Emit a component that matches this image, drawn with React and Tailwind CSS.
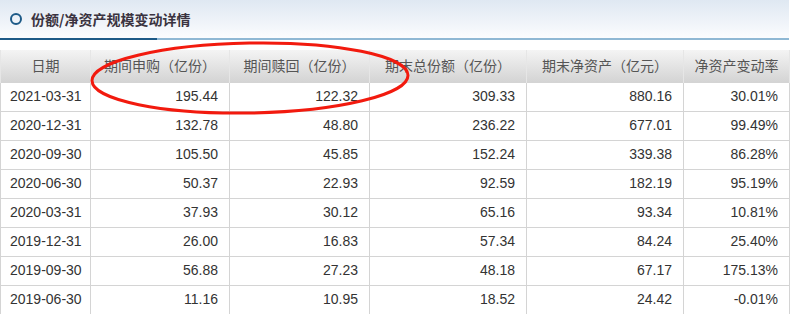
const cols = [
  { label: "日期", w: "w-[90px]" },
  { label: "期间申购（亿份）", w: "w-[139px]" },
  { label: "期间赎回（亿份）", w: "w-[140px]" },
  { label: "期末总份额（亿份）", w: "w-[157px]" },
  { label: "期末净资产（亿元）", w: "w-[157px]" },
  { label: "净资产变动率", w: "w-[106px]" },
];

const rows = [
  ["2021-03-31", "195.44", "122.32", "309.33", "880.16", "30.01%"],
  ["2020-12-31", "132.78", "48.80", "236.22", "677.01", "99.49%"],
  ["2020-09-30", "105.50", "45.85", "152.24", "339.38", "86.28%"],
  ["2020-06-30", "50.37", "22.93", "92.59", "182.19", "95.19%"],
  ["2020-03-31", "37.93", "30.12", "65.16", "93.34", "10.81%"],
  ["2019-12-31", "26.00", "16.83", "57.34", "84.24", "25.40%"],
  ["2019-09-30", "56.88", "27.23", "48.18", "67.17", "175.13%"],
  ["2019-06-30", "11.16", "10.95", "18.52", "24.42", "-0.01%"],
];

export default function App() {
  return (
    <div className="relative w-[795px] h-[314px] overflow-hidden bg-white font-['Liberation_Sans','Noto_Sans_CJK_SC',sans-serif]">
      {/* 标题栏 */}
      <div className="h-[40px] w-[789px] flex flex-col">
        <div className="h-[38px] flex items-center bg-gradient-to-b from-[#dfe8f2] to-[#fbfcfe]">
          <span className="ml-[10px] w-[12px] h-[12px] rounded-full border-2 border-[#1d5a87]" />
          <span className="ml-[9px] text-[14px] font-bold text-[#3a3340] font-['Noto_Sans_CJK_SC',sans-serif]">
            份额/净资产规模变动详情
          </span>
        </div>
        <div className="flex h-[2px]">
          <div className="w-[157px] bg-[#1d5a87]" />
          <div className="flex-1 bg-[#8fb8d4]" />
        </div>
      </div>

      <table className="mt-[10px] w-[789px] border-collapse table-fixed">
        <thead>
          <tr className="h-[32px] bg-gradient-to-b from-[#f4f4f4] to-[#d4d4d4]">
            {cols.map((c) => (
              <th
                key={c.label}
                className={`${c.w} p-0 text-center font-normal text-[14px] text-[#555] border-x border-[#e6e6e6] font-['Noto_Sans_CJK_SC',sans-serif]`}
              >
                {c.label}
              </th>
            ))}
          </tr>
        </thead>
        <tbody>
          {rows.map((r) => (
            <tr key={r[0]} className="h-[29px]">
              {r.map((v, i) => (
                <td
                  key={i}
                  className={`p-0 border border-[#d4d4d4] text-[14px] text-[#333] ${
                    i === 0 ? "text-left pl-[9px]" : "text-right pr-[11px]"
                  }`}
                >
                  {v}
                </td>
              ))}
            </tr>
          ))}
        </tbody>
      </table>

      {/* 红色圈注 */}
      <svg
        className="absolute left-0 top-0 pointer-events-none"
        width="795"
        height="314"
      >
        <ellipse
          cx="250"
          cy="78"
          rx="158"
          ry="35"
          fill="none"
          stroke="#f21a0e"
          strokeWidth="3"
          transform="rotate(-1 250 78)"
        />
      </svg>
    </div>
  );
}
